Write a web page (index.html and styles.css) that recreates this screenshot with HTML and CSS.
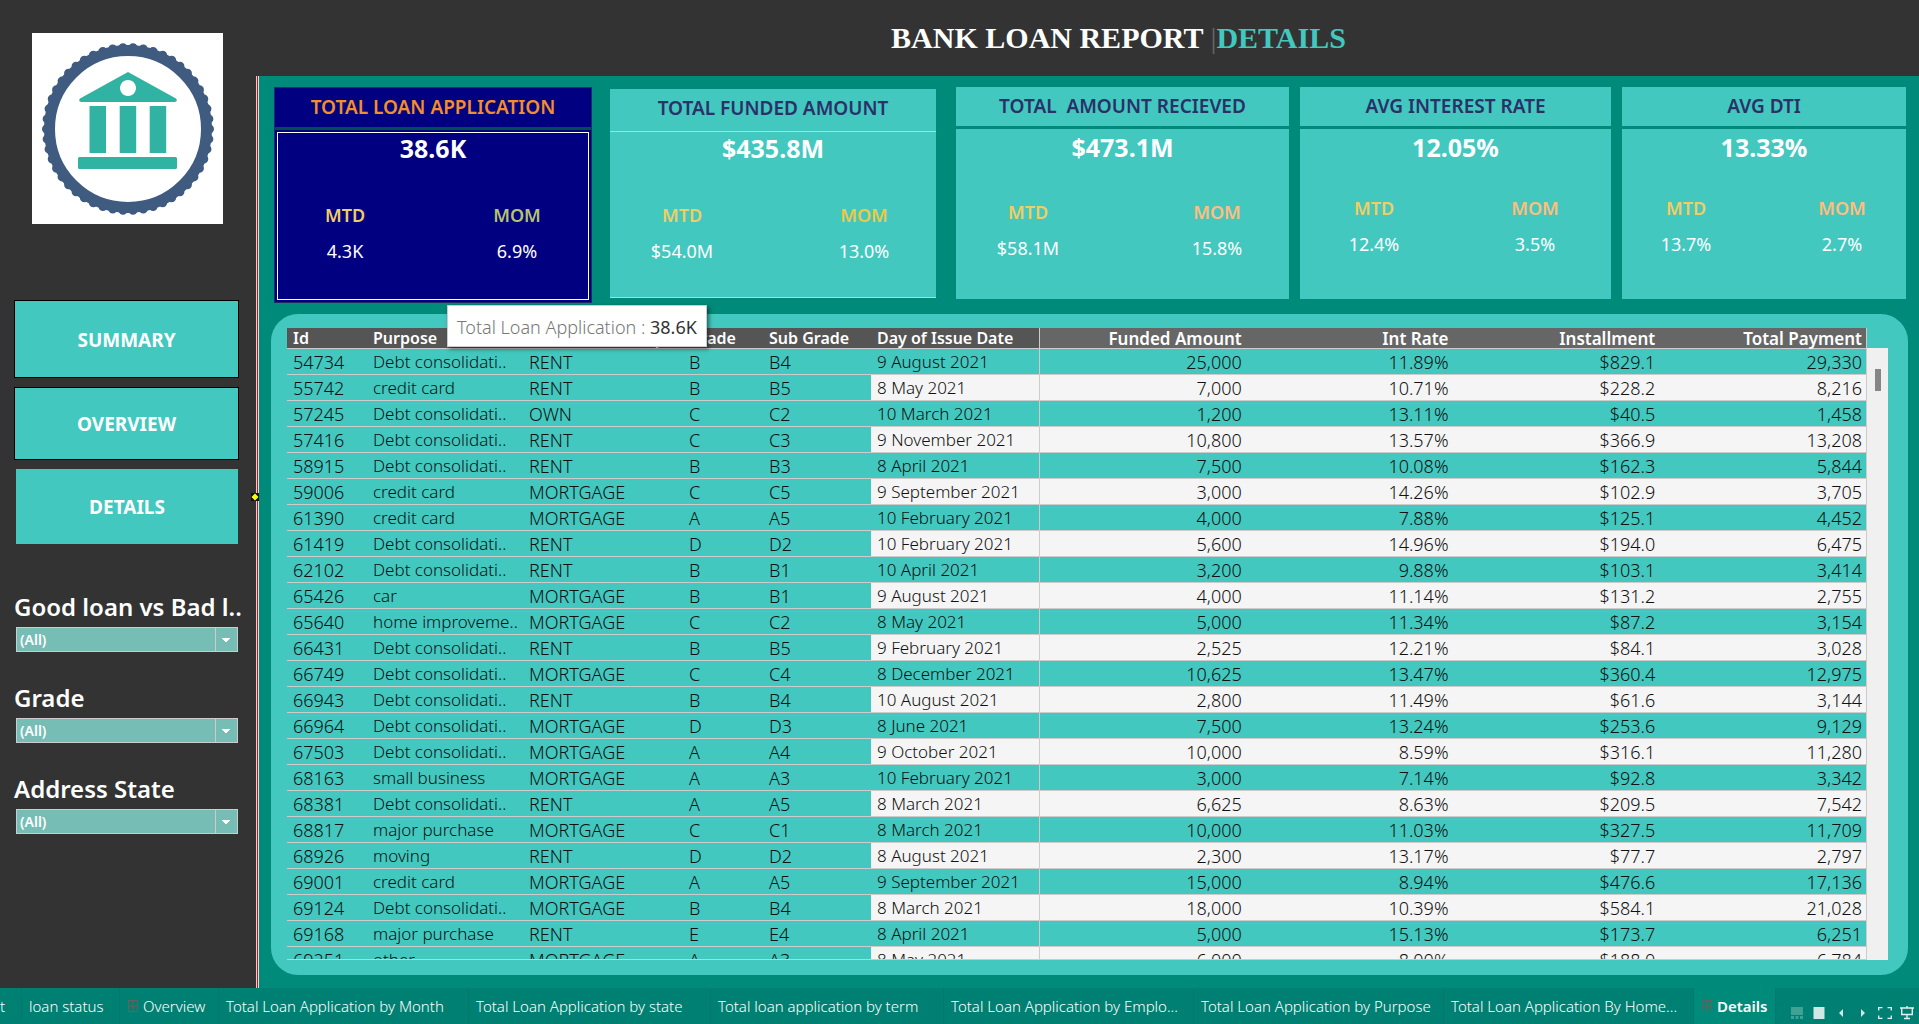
FILE: index.html
```html
<!DOCTYPE html>
<html lang="en">
<head>
<meta charset="utf-8">
<meta name="viewport" content="width=device-width, initial-scale=1">
<title>Bank Loan Report | Details</title>
<link rel="stylesheet" href="styles.css">
</head>
<body>
<div class="app">
  <aside class="sidebar">
    <svg class="logo" viewBox="0 0 191 191" role="img" aria-label="Bank logo">
      <rect width="191" height="191" fill="#fff"/>
      <circle cx="96" cy="96" r="81.500" pathLength="50" fill="none" stroke="#3f5b80" stroke-width="9" stroke-linecap="round" stroke-dasharray="0 1"/>
      <circle cx="96" cy="96" r="78.500" fill="none" stroke="#3f5b80" stroke-width="11"/>
      <g fill="#31b3a3">
        <path fill-rule="evenodd" d="M96 39 L144 65.500 Q146 68.500 143 69 H49 Q46 68.500 48 65.500 Z M96 47 a8 8 0 1 0 0.010 0 Z"/>
        <path d="M57.500 73 h16.500 v47 h-16.500 z M87.700 73 h16.500 v47 h-16.500 z M117.700 73 h16.500 v47 h-16.500 z"/>
        <rect x="46" y="124" width="99" height="12" rx="1.500"/>
      </g>
    </svg>
    <nav class="menu">
      <button type="button" class="menu-button menu-summary">SUMMARY</button>
      <button type="button" class="menu-button menu-overview">OVERVIEW</button>
      <button type="button" class="menu-button menu-details">DETAILS</button>
    </nav>
    <div class="filters">
      <div class="filter">
        <label for="f-loan">Good loan vs Bad l..</label>
        <select id="f-loan"><option>(All)</option></select>
      </div>
      <div class="filter">
        <label for="f-grade">Grade</label>
        <select id="f-grade"><option>(All)</option></select>
      </div>
      <div class="filter">
        <label for="f-state">Address State</label>
        <select id="f-state"><option>(All)</option></select>
      </div>
    </div>
  </aside>

  <header class="title-bar"><h1>BANK LOAN REPORT <span class="bar">|</span><span class="accent">DETAILS</span></h1></header>

  <main class="board">
    <svg class="handle" viewBox="0 0 8 8" aria-hidden="true"><rect width="8" height="8" fill="#111"/><path d="M4 0.500 L7.500 4 L4 7.500 L0.500 4 Z" fill="#ff0"/></svg>
    <section class="kpis">
      <article class="kpi kpi-loans">
        <h2>TOTAL LOAN APPLICATION</h2>
        <div class="kpi-body">
          <p class="total">38.6K</p>
          <dl><div><dt>MTD</dt><dd>4.3K</dd></div><div><dt class="olive">MOM</dt><dd>6.9%</dd></div></dl>
        </div>
      </article>
      <article class="kpi kpi-funded">
        <h2>TOTAL FUNDED AMOUNT</h2>
        <div class="kpi-body">
          <p class="total">$435.8M</p>
          <dl><div><dt>MTD</dt><dd>$54.0M</dd></div><div><dt class="gold">MOM</dt><dd>13.0%</dd></div></dl>
        </div>
      </article>
      <article class="kpi kpi-received">
        <h2>TOTAL &nbsp;AMOUNT RECIEVED</h2>
        <div class="kpi-body">
          <p class="total">$473.1M</p>
          <dl><div><dt>MTD</dt><dd>$58.1M</dd></div><div><dt class="peach">MOM</dt><dd>15.8%</dd></div></dl>
        </div>
      </article>
      <article class="kpi kpi-rate">
        <h2>AVG INTEREST RATE</h2>
        <div class="kpi-body">
          <p class="total">12.05%</p>
          <dl><div><dt>MTD</dt><dd>12.4%</dd></div><div><dt class="peach">MOM</dt><dd>3.5%</dd></div></dl>
        </div>
      </article>
      <article class="kpi kpi-dti">
        <h2>AVG DTI</h2>
        <div class="kpi-body">
          <p class="total">13.33%</p>
          <dl><div><dt>MTD</dt><dd>13.7%</dd></div><div><dt class="peach">MOM</dt><dd>2.7%</dd></div></dl>
        </div>
      </article>
    </section>

    <div class="tooltip" role="tooltip">Total Loan Application : <b>38.6K</b></div>

    <section class="panel">
      <div class="table-view">
        <table>
          <colgroup><col class="c-id"><col class="c-purpose"><col class="c-home"><col class="c-grade"><col class="c-sub"><col class="c-date"><col><col><col><col></colgroup>
          <thead><tr><th>Id</th><th>Purpose</th><th>Home Ownership</th><th>Grade</th><th>Sub Grade</th><th>Day of Issue Date</th><th>Funded Amount</th><th>Int Rate</th><th>Installment</th><th>Total Payment</th></tr></thead>
          <tbody>
            <tr><td>54734</td><td>Debt consolidati..</td><td>RENT</td><td>B</td><td>B4</td><td>9 August 2021</td><td>25,000</td><td>11.89%</td><td>$829.1</td><td>29,330</td></tr>
            <tr><td>55742</td><td>credit card</td><td>RENT</td><td>B</td><td>B5</td><td>8 May 2021</td><td>7,000</td><td>10.71%</td><td>$228.2</td><td>8,216</td></tr>
            <tr><td>57245</td><td>Debt consolidati..</td><td>OWN</td><td>C</td><td>C2</td><td>10 March 2021</td><td>1,200</td><td>13.11%</td><td>$40.5</td><td>1,458</td></tr>
            <tr><td>57416</td><td>Debt consolidati..</td><td>RENT</td><td>C</td><td>C3</td><td>9 November 2021</td><td>10,800</td><td>13.57%</td><td>$366.9</td><td>13,208</td></tr>
            <tr><td>58915</td><td>Debt consolidati..</td><td>RENT</td><td>B</td><td>B3</td><td>8 April 2021</td><td>7,500</td><td>10.08%</td><td>$162.3</td><td>5,844</td></tr>
            <tr><td>59006</td><td>credit card</td><td>MORTGAGE</td><td>C</td><td>C5</td><td>9 September 2021</td><td>3,000</td><td>14.26%</td><td>$102.9</td><td>3,705</td></tr>
            <tr><td>61390</td><td>credit card</td><td>MORTGAGE</td><td>A</td><td>A5</td><td>10 February 2021</td><td>4,000</td><td>7.88%</td><td>$125.1</td><td>4,452</td></tr>
            <tr><td>61419</td><td>Debt consolidati..</td><td>RENT</td><td>D</td><td>D2</td><td>10 February 2021</td><td>5,600</td><td>14.96%</td><td>$194.0</td><td>6,475</td></tr>
            <tr><td>62102</td><td>Debt consolidati..</td><td>RENT</td><td>B</td><td>B1</td><td>10 April 2021</td><td>3,200</td><td>9.88%</td><td>$103.1</td><td>3,414</td></tr>
            <tr><td>65426</td><td>car</td><td>MORTGAGE</td><td>B</td><td>B1</td><td>9 August 2021</td><td>4,000</td><td>11.14%</td><td>$131.2</td><td>2,755</td></tr>
            <tr><td>65640</td><td>home improveme..</td><td>MORTGAGE</td><td>C</td><td>C2</td><td>8 May 2021</td><td>5,000</td><td>11.34%</td><td>$87.2</td><td>3,154</td></tr>
            <tr><td>66431</td><td>Debt consolidati..</td><td>RENT</td><td>B</td><td>B5</td><td>9 February 2021</td><td>2,525</td><td>12.21%</td><td>$84.1</td><td>3,028</td></tr>
            <tr><td>66749</td><td>Debt consolidati..</td><td>MORTGAGE</td><td>C</td><td>C4</td><td>8 December 2021</td><td>10,625</td><td>13.47%</td><td>$360.4</td><td>12,975</td></tr>
            <tr><td>66943</td><td>Debt consolidati..</td><td>RENT</td><td>B</td><td>B4</td><td>10 August 2021</td><td>2,800</td><td>11.49%</td><td>$61.6</td><td>3,144</td></tr>
            <tr><td>66964</td><td>Debt consolidati..</td><td>MORTGAGE</td><td>D</td><td>D3</td><td>8 June 2021</td><td>7,500</td><td>13.24%</td><td>$253.6</td><td>9,129</td></tr>
            <tr><td>67503</td><td>Debt consolidati..</td><td>MORTGAGE</td><td>A</td><td>A4</td><td>9 October 2021</td><td>10,000</td><td>8.59%</td><td>$316.1</td><td>11,280</td></tr>
            <tr><td>68163</td><td>small business</td><td>MORTGAGE</td><td>A</td><td>A3</td><td>10 February 2021</td><td>3,000</td><td>7.14%</td><td>$92.8</td><td>3,342</td></tr>
            <tr><td>68381</td><td>Debt consolidati..</td><td>RENT</td><td>A</td><td>A5</td><td>8 March 2021</td><td>6,625</td><td>8.63%</td><td>$209.5</td><td>7,542</td></tr>
            <tr><td>68817</td><td>major purchase</td><td>MORTGAGE</td><td>C</td><td>C1</td><td>8 March 2021</td><td>10,000</td><td>11.03%</td><td>$327.5</td><td>11,709</td></tr>
            <tr><td>68926</td><td>moving</td><td>RENT</td><td>D</td><td>D2</td><td>8 August 2021</td><td>2,300</td><td>13.17%</td><td>$77.7</td><td>2,797</td></tr>
            <tr><td>69001</td><td>credit card</td><td>MORTGAGE</td><td>A</td><td>A5</td><td>9 September 2021</td><td>15,000</td><td>8.94%</td><td>$476.6</td><td>17,136</td></tr>
            <tr><td>69124</td><td>Debt consolidati..</td><td>MORTGAGE</td><td>B</td><td>B4</td><td>8 March 2021</td><td>18,000</td><td>10.39%</td><td>$584.1</td><td>21,028</td></tr>
            <tr><td>69168</td><td>major purchase</td><td>RENT</td><td>E</td><td>E4</td><td>8 April 2021</td><td>5,000</td><td>15.13%</td><td>$173.7</td><td>6,251</td></tr>
            <tr><td>69251</td><td>other</td><td>MORTGAGE</td><td>A</td><td>A3</td><td>8 May 2021</td><td>6,000</td><td>8.00%</td><td>$188.0</td><td>6,784</td></tr>
          </tbody>
        </table>
      </div>
      <div class="scrollbar"><div class="thumb"></div></div>
    </section>
  </main>

  <footer class="tabs">
    <nav class="tab-list">
      <a href="#" class="tab tab-cut">t</a>
      <a href="#" class="tab tab-status">loan status</a>
      <a href="#" class="tab tab-overview"><svg class="grid-icon" viewBox="0 0 12 12" aria-hidden="true"><path d="M1.500 0.500 H10.500 V11.500 H1.500 Z M6 0.500 V11.500 M1.500 6 H10.500"/></svg>Overview</a>
      <a href="#" class="tab tab-wide">Total Loan Application by Month</a>
      <a href="#" class="tab tab-mid">Total Loan Application by state</a>
      <a href="#" class="tab tab-term">Total loan application by term</a>
      <a href="#" class="tab tab-wide">Total Loan Application by Emplo...</a>
      <a href="#" class="tab tab-wide">Total Loan Application by Purpose</a>
      <a href="#" class="tab tab-wide">Total Loan Application By Home...</a>
      <a href="#" class="tab tab-current" aria-current="page"><svg class="grid-icon" viewBox="0 0 12 12" aria-hidden="true"><path d="M1.500 0.500 H10.500 V11.500 H1.500 Z M6 0.500 V11.500 M1.500 6 H10.500"/></svg>Details</a>
    </nav>
    <div class="tools">
      <button type="button" aria-label="Show filmstrip"><svg viewBox="0 0 14 14" fill="#40a196"><path d="M1 1 H13 V9 H1 Z M1 10 H4 V13 H1 Z M5.500 10 H8.500 V13 H5.500 Z M10 10 H13 V13 H10 Z"/></svg></button>
      <button type="button" aria-label="Show tabs"><svg viewBox="0 0 14 14" fill="#cfe8e5"><path d="M1.500 1 H12.500 V13 H1.500 Z"/></svg></button>
      <button type="button" aria-label="Previous sheet"><svg viewBox="0 0 14 14" fill="#cfe8e5"><path d="M9 3 V11 L5 7 Z"/></svg></button>
      <button type="button" aria-label="Next sheet"><svg viewBox="0 0 14 14" fill="#cfe8e5"><path d="M5 3 V11 L9 7 Z"/></svg></button>
      <button type="button" aria-label="Full screen"><svg viewBox="0 0 14 14" fill="none" stroke="#e4f3f1" stroke-width="1.300"><path d="M0.700 4.500 V1.700 H4.500 M9.500 1.700 H13.300 V4.500 M13.300 9.500 V12.300 H9.500 M4.500 12.300 H0.700 V9.500"/></svg></button>
      <button type="button" aria-label="Presentation mode"><svg viewBox="0 0 14 14" fill="none" stroke="#e4f3f1" stroke-width="1.400"><path d="M0 2 H14 M1.700 2 V8.500 H12.300 V2 M7 0 V2 M7 8.500 V12.500 M4 12.500 H10"/></svg></button>
    </div>
  </footer>
</div>
</body>
</html>
```
FILE: styles.css
```css
* { box-sizing: border-box; }

body {
  margin: 0;
  font-family: "Noto Sans", "Open Sans", sans-serif;
  background: #333;
}

h1, h2, p, dl, dd { margin: 0; }

button { font: inherit; cursor: pointer; }

.app {
  display: grid;
  grid-template: 76px minmax(0, 1fr) 36px / 256px minmax(0, 1fr);
  height: 100vh;
  overflow: hidden;
}

/* Sidebar */
.sidebar {
  grid-row: 1 / 3;
  padding: 33px 17px 0 14px;
  display: flex;
  flex-direction: column;
}

.logo { width: 191px; height: 191px; margin-left: 18px; }

.menu {
  display: flex;
  flex-direction: column;
  gap: 9px;
  margin-top: 76px;
}

.menu-button {
  padding: 1px 0 0;
  border: 1px solid #000;
  background: #42c8bf;
  color: #fff;
  font-size: 19px;
  font-weight: 700;
}

.menu-summary { height: 78px; }
.menu-overview { height: 73px; }
.menu-details { height: 75px; margin: 0 1px 0 2px; border: 0; }

.filters {
  display: flex;
  flex-direction: column;
  gap: 30px;
  margin-top: 47px;
}

.filter { display: flex; flex-direction: column; gap: 4px; }

.filter label {
  color: #fff;
  font-size: 24px;
  font-weight: 600;
  line-height: 32px;
  white-space: nowrap;
}

.filter select {
  appearance: none;
  height: 25px;
  margin: 0 1px 0 2px;
  padding: 0 3px;
  border: 1px solid #ccc;
  border-radius: 0;
  color: #fff;
  font: 600 14px/22px "Noto Sans", sans-serif;
  background:
    conic-gradient(from 315deg at 50% 100%, #fff 90deg, transparent 0) right 8px center / 8px 4px no-repeat,
    linear-gradient(#ccc, #ccc) right 22px top / 1px 100% no-repeat,
    #76bdb5;
  background:
    linear-gradient(to bottom right, #fff 50%, transparent 51%) right 7px center / 4px 4px no-repeat,
    linear-gradient(to bottom left, #fff 50%, transparent 51%) right 11px center / 4px 4px no-repeat,
    linear-gradient(#ccc, #ccc) right 21px top / 1px 100% no-repeat,
    #76bdb5;
}

/* Title */
.title-bar {
  display: flex;
  align-items: center;
  justify-content: center;
  padding-left: 62px;
}

.title-bar h1 {
  color: #fff;
  font: bold 30px/36px "Liberation Serif", serif;
}

.title-bar .bar { color: #666; font-weight: normal; }
.title-bar .accent { color: #42c8bf; }

/* Board */
.board {
  position: relative;
  display: flex;
  flex-direction: column;
  padding: 11px 11px 13px 12px;
  border-left: 1px solid #ddd;
  background: linear-gradient(90deg, #f00 1px, #ddd 1px, #ddd 2px, #008a7a 2px);
}

.handle {
  position: absolute;
  left: -6px;
  top: 417px;
  width: 8px;
  height: 8px;
}

.kpis {
  display: grid;
  grid-template-columns: 318fr 344fr 353fr 322fr 295fr;
  align-items: start;
  height: 227px;
  padding: 0 2px 0 5px;
  flex: none;
}

.kpi {
  display: flex;
  flex-direction: column;
  gap: 3px;
  height: 212px;
}

.kpi h2 {
  height: 39px;
  background: #42c8bf;
  color: #2b3068;
  font-size: 19px;
  font-weight: 600;
  line-height: 38px;
  text-align: center;
}

.kpi-body { flex: 1; background: #42c8bf; color: #fff; text-align: center; }
.kpi .total { font-size: 25px; font-weight: 700; line-height: 36px; }

.kpi dl {
  display: flex;
  justify-content: space-between;
  padding: 0 30px;
  margin-top: 34px;
}

.kpi dl div { width: 84px; }
.kpi dt { color: #f1ce63; font-size: 18px; font-weight: 600; line-height: 26px; }
.kpi dd { margin-top: 10px; font-size: 18px; line-height: 26px; }
.kpi .olive { color: #b6c46c; }
.kpi .gold { color: #edc948; }
.kpi .peach { color: #ffbe7d; }

.kpi-loans {
  height: 216px;
  border: 1px solid #1d2a63;
  background: #004d50;
}

.kpi-loans h2 { background: #000080; color: #f28e2b; }

.kpi-loans .kpi-body {
  border: 2px solid #000080;
  outline: 1px solid #fff;
  outline-offset: -3px;
  background: #000080;
}

.kpi-loans dl { padding: 0 30px 0 26px; margin-top: 38px; }
.kpi-loans .total { line-height: 32px; }

.kpi-funded {
  gap: 0;
  height: 209px;
  margin: 2px 0 0 18px;
  border-bottom: 1px solid #ccc;
}

.kpi-funded h2 { height: 43px; border-bottom: 1px solid #ccc; }
.kpi-funded .total { line-height: 32px; }
.kpi-funded dl { margin-top: 38px; }

.kpi-received { margin-left: 20px; }
.kpi-rate { margin-left: 11px; }
.kpi-dti { margin-left: 11px; }
.kpi-rate dl, .kpi-dti dl { margin-top: 30px; }
.kpi-rate dl { padding: 0 34px 0 32px; }
.kpi-dti dl { padding: 0 22px; }

.tooltip {
  position: absolute;
  z-index: 2;
  left: 190px;
  top: 229px;
  width: 260px;
  height: 42px;
  padding: 0 9px;
  border: 1px solid #ccc;
  background: #fff;
  box-shadow: 2px 2px 4px rgba(0, 0, 0, 0.5);
  color: #777;
  font-size: 18px;
  font-weight: 300;
  line-height: 42px;
  white-space: nowrap;
}

.tooltip b { color: #333; font-weight: 400; }

/* Loan table */
.panel {
  display: flex;
  flex: 1;
  min-height: 0;
  margin-left: 2px;
  padding: 14px 20px 15px 16px;
  border-radius: 27px;
  background: #42c8bf;
}

.table-view {
  flex: 1;
  min-width: 0;
  overflow: hidden;
  border-bottom: 1px solid #ccc;
}

.table-view table {
  width: 100%;
  table-layout: fixed;
  border-collapse: separate;
  border-spacing: 0;
  font-size: 18px;
  font-weight: 300;
  color: #111;
}

.c-id { width: 80px; }
.c-purpose { width: 156px; }
.c-home { width: 160px; }
.c-grade { width: 80px; }
.c-sub { width: 108px; }
.c-date { width: 169px; }

th, td {
  height: 26px;
  padding: 1px 0 0 6px;
  border-bottom: 1px solid #ccc;
  line-height: 24px;
  text-align: left;
  white-space: nowrap;
}

td:nth-child(2), td:nth-child(6) { font-size: 17px; }

th {
  height: 21px;
  background: #555;
  color: #fff;
  font-size: 16px;
  font-weight: 600;
  line-height: 19px;
}

th:nth-child(6), td:nth-child(6), th:last-child, td:last-child { border-right: 1px solid #ccc; }
th:nth-child(n+7), td:nth-child(n+7) { padding: 1px 5px 0 0; text-align: right; }
th:last-child, td:last-child { padding-right: 4px; }
th:nth-child(n+7) { background: #666; font-size: 17px; }
tbody tr:nth-child(even) td:nth-child(n+6) { background: #f5f5f5; }

.scrollbar {
  width: 21px;
  margin-top: 20px;
  padding: 21px 7px 0 8px;
  background: #f0f0f0;
}

.thumb { height: 22px; background: #868686; }

/* Sheet tabs */
.tabs {
  grid-column: 1 / 3;
  display: flex;
  justify-content: space-between;
  background: #008073;
}

.tab-list { display: flex; min-width: 0; }

.tab {
  display: flex;
  align-items: center;
  flex: none;
  padding: 0 7px;
  border-right: 1px solid #00786b;
  color: #fff;
  font-size: 15px;
  font-weight: 300;
  text-decoration: none;
  white-space: nowrap;
}

.tab-cut { width: 22px; padding: 0; }
.tab-status { width: 98px; }
.tab-overview { width: 99px; }
.tab-wide { width: 250px; }
.tab-mid { width: 242px; }
.tab-term { width: 233px; }
.tab-current { width: 82px; background: #008a7a; font-weight: 600; }

.grid-icon {
  width: 12px;
  height: 12px;
  margin-right: 4px;
  fill: none;
  stroke: #6b5f5c;
}

.tools { display: flex; align-items: flex-end; gap: 8px; padding: 0 5px 4px 0; }
.tools button { width: 14px; height: 14px; padding: 0; border: 0; background: none; }
.tools svg { display: block; width: 14px; height: 14px; }
```
